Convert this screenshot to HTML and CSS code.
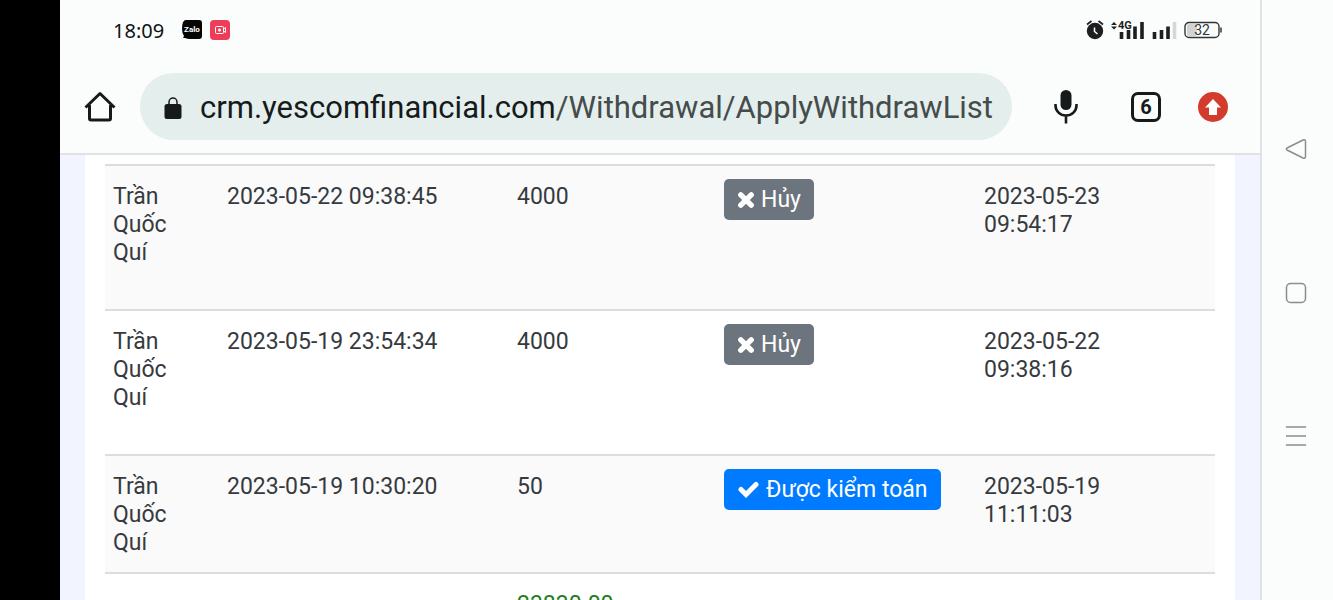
FILE: index.html
```html
<!DOCTYPE html>
<html lang="vi">
<head>
  <meta charset="UTF-8">
  <meta name="viewport" content="width=device-width, initial-scale=1">
  <title>ApplyWithdrawList</title>
  <link rel="stylesheet" href="styles.css">
</head>
<body>
  <div class="notch"></div>

  <div class="screen">
    <div class="status-bar">
      <div class="status-left">
        <span class="time">18:09</span>
        <svg width="20" height="20" viewBox="0 0 20 20">
          <path d="M4 0h13q3 0 3 3v13q0 3-3 3H8q-3 0-5-1l-2 0 1-2Q0 13 0 9 0 0 4 0z" fill="#050505"/>
          <text x="10" y="12" text-anchor="middle" class="zalo-text">Zalo</text>
        </svg>
        <svg width="20" height="20" viewBox="0 0 20 20">
          <rect width="20" height="20" rx="4" fill="#ee3d58"/>
          <g fill="none" stroke="#fff" stroke-width="1">
            <rect x="5.500" y="6.500" width="8" height="7" rx="1"/>
            <path d="M13.500 9l2-1.500v5l-2-1.500"/>
          </g>
          <circle cx="9.500" cy="10" r="1.500" fill="#fff"/>
        </svg>
      </div>
      <div class="status-right">
        <svg width="18" height="20" viewBox="0 0 18 20">
          <circle cx="9" cy="11" r="8.200" fill="#1b1f20"/>
          <path d="M1 4.500L5.500 1M17 4.500L12.500 1" stroke="#1b1f20" stroke-width="1.600"/>
          <path d="M8.500 7.500v4l3 2.500" fill="none" stroke="#fff" stroke-width="1.500"/>
        </svg>
        <svg width="34" height="20" viewBox="0 0 34 20">
          <path d="M0 5l3-3 3 3zM0 6.500l3 3 3-3z" fill="#1b1f20"/>
          <text x="7" y="9" class="net-text">4G</text>
          <path d="M10.500 12v7M17.500 10v9M24 6.500V19M31 2v17" stroke="#1b1f20" stroke-width="3.600"/>
        </svg>
        <svg width="25" height="20" viewBox="0 0 25 20">
          <path d="M2.500 12v7M9.500 10v9M16 6.500V19" stroke="#1b1f20" stroke-width="3.600"/>
          <path d="M22.500 2v17" stroke="#d5d8d7" stroke-width="3.600"/>
        </svg>
        <svg width="38" height="18" viewBox="0 0 38 18">
          <rect x="3" y="3" width="10" height="12" rx="2" fill="#d0d3d2"/>
          <rect x="1" y="1.500" width="34" height="15" rx="4" fill="none" stroke="#303435" stroke-width="1.400"/>
          <path d="M37 6.500v5" stroke="#303435" stroke-width="1.500"/>
          <text x="18" y="14" text-anchor="middle" class="battery-text">32</text>
        </svg>
      </div>
    </div>

    <div class="toolbar">
      <button class="icon-btn" aria-label="Home">
        <svg width="32" height="32" viewBox="0 0 32 32" fill="none" stroke="#161a1b" stroke-width="3" stroke-linejoin="round">
          <path d="M1.500 16.500L16 2.500l14.500 14"/>
          <path d="M5.500 14v13.500q0 1.500 1.500 1.500h18q1.500 0 1.500-1.500V14"/>
        </svg>
      </button>
      <button class="address">
        <svg width="18" height="22" viewBox="0 0 18 22">
          <rect x="0.500" y="7" width="17" height="15" rx="2.500" fill="#161a1b"/>
          <path d="M5 8V5a4 4 0 0 1 8 0v3" fill="none" stroke="#161a1b" stroke-width="1.500"/>
        </svg>
        <span class="url">crm.yescomfinancial.com<span class="path">/Withdrawal/ApplyWithdrawList</span></span>
      </button>
      <button class="icon-btn mic" aria-label="Voice search">
        <svg width="24" height="34" viewBox="0 0 24 34">
          <rect x="6.500" y="0" width="11" height="20" rx="5.500" fill="#161a1b"/>
          <path d="M1.500 14v1.500a10.500 10 0 0 0 21 0V14M12 26v7.500" fill="none" stroke="#161a1b" stroke-width="2.600"/>
        </svg>
      </button>
      <button class="tabs" aria-label="Tabs">6</button>
      <button class="icon-btn" aria-label="Update">
        <svg width="30" height="30" viewBox="0 0 30 30">
          <circle cx="15" cy="15" r="15" fill="#d33b2c"/>
          <path d="M15 7l8 8.500h-4V23h-8v-7.500H7z" fill="#fff"/>
        </svg>
      </button>
    </div>

    <div class="page">
      <div class="card">
        <table class="withdraw-table">
          <colgroup>
            <col class="col-name">
            <col class="col-date">
            <col class="col-amount">
            <col class="col-status">
            <col>
          </colgroup>
          <tbody>
            <tr class="tall">
              <td class="name">Trần Quốc Quí</td>
              <td>2023-05-22 09:38:45</td>
              <td>4000</td>
              <td class="status">
                <button class="btn btn-secondary">
                  <svg width="18" height="18" viewBox="0 0 18 18"><path d="M3.800 3.800l10.400 10.400M14.200 3.800L3.800 14.200" stroke="#fff" stroke-width="5.400" stroke-linecap="round"/></svg>
                  Hủy
                </button>
              </td>
              <td>2023-05-23 09:54:17</td>
            </tr>
            <tr class="tall">
              <td class="name">Trần Quốc Quí</td>
              <td>2023-05-19 23:54:34</td>
              <td>4000</td>
              <td class="status">
                <button class="btn btn-secondary">
                  <svg width="18" height="18" viewBox="0 0 18 18"><path d="M3.800 3.800l10.400 10.400M14.200 3.800L3.800 14.200" stroke="#fff" stroke-width="5.400" stroke-linecap="round"/></svg>
                  Hủy
                </button>
              </td>
              <td>2023-05-22 09:38:16</td>
            </tr>
            <tr>
              <td class="name">Trần Quốc Quí</td>
              <td>2023-05-19 10:30:20</td>
              <td>50</td>
              <td class="status">
                <button class="btn btn-primary">
                  <svg width="23" height="18" viewBox="0 0 23 18"><path d="M4 8.500l5 5L19 3.500" fill="none" stroke="#fff" stroke-width="5" stroke-linecap="round"/></svg>
                  Được kiểm toán
                </button>
              </td>
              <td>2023-05-19 11:11:03</td>
            </tr>
            <tr>
              <td></td>
              <td></td>
              <td class="total">23830.00</td>
              <td></td>
              <td></td>
            </tr>
          </tbody>
        </table>
      </div>
    </div>
  </div>

  <nav class="system-nav">
    <button class="icon-btn" aria-label="Back">
      <svg width="22" height="22" viewBox="0 0 22 22" fill="none" stroke="#8a8d8c" stroke-width="1.500"><path d="M2 10L18 2q2.500-.8 2.500 1.500v15q0 2.300-2.500 1.500L2 12q-1.500-1 0-2z"/></svg>
    </button>
    <button class="icon-btn" aria-label="Home screen">
      <svg width="22" height="22" viewBox="0 0 22 22" fill="none" stroke="#8a8d8c" stroke-width="1.500"><rect x="1.500" y="1.500" width="19" height="19" rx="4"/></svg>
    </button>
    <button class="icon-btn" aria-label="Recent apps">
      <svg width="22" height="22" viewBox="0 0 22 22" stroke="#8a8d8c" stroke-width="1.500"><path d="M1 2h20M1 11h20M1 20h20"/></svg>
    </button>
  </nav>
</body>
</html>
```
FILE: styles.css
```css
* {
  box-sizing: border-box;
}
body {
  margin: 0;
  height: 100vh;
  display: flex;
  overflow: hidden;
  font-family: Roboto, Arial, sans-serif;
  background: #fbfdfc;
  color: #363a40;
}
button {
  font-family: inherit;
  border: none;
  background: none;
  padding: 0;
  cursor: pointer;
}
svg {
  display: block;
  flex: none;
}
.notch {
  width: 60px;
  background: #000;
}
.screen {
  flex: 1;
  min-width: 0;
  display: flex;
  flex-direction: column;
}

/* status bar */
.status-bar {
  height: 60px;
  padding: 0 38px 0 53px;
  display: flex;
  align-items: center;
  justify-content: space-between;
}
.status-left {
  display: flex;
  align-items: center;
  gap: 8px;
}
.status-right {
  display: flex;
  align-items: center;
  gap: 7px;
}
.time {
  font-family: "Noto Sans", sans-serif;
  font-size: 20px;
  color: #101314;
  margin-right: 10px;
}
.zalo-text {
  font: bold 8px Roboto, sans-serif;
  fill: #fff;
}
.net-text {
  font: bold 11px Roboto, sans-serif;
  fill: #1b1f20;
}
.battery-text {
  font: 14px Roboto, sans-serif;
  fill: #303435;
}

/* browser toolbar */
.toolbar {
  height: 95px;
  padding: 0 32px 0 24px;
  display: flex;
  align-items: center;
  border-bottom: 2px solid #dfe3e3;
}
.address {
  flex: 1;
  min-width: 0;
  height: 67px;
  margin: 0 42px 0 24px;
  padding: 2px 16px 0 24px;
  display: flex;
  align-items: center;
  gap: 18px;
  border-radius: 34px;
  background: #e4eeed;
}
.url {
  font-size: 31px;
  white-space: nowrap;
  color: #161a1b;
}
.path {
  color: #444c4c;
}
.mic {
  margin-right: 53px;
}
.tabs {
  width: 30px;
  height: 30px;
  margin-right: 37px;
  border: 3px solid #161a1b;
  border-radius: 7px;
  font-family: Roboto, sans-serif;
  font-size: 20px;
  font-weight: 700;
  line-height: 24px;
  color: #161a1b;
}

/* page content */
.page {
  flex: 1;
  min-height: 0;
  overflow: hidden;
  padding: 0 25px;
  background: #f2f4ff;
}
.card {
  padding: 9px 20px 20px;
  background: #fff;
}
.withdraw-table {
  width: 100%;
  table-layout: fixed;
  border-collapse: separate;
  border-spacing: 0;
}
.col-name {
  width: 114px;
}
.col-date {
  width: 290px;
}
.col-amount {
  width: 207px;
}
.col-status {
  width: 260px;
}
.withdraw-table td {
  padding: 17px 8px 15px;
  border-top: 2px solid #dcdddf;
  vertical-align: top;
  font-size: 23px;
  line-height: 28px;
}
.withdraw-table .name {
  padding-right: 24px;
}
.withdraw-table td:last-child {
  padding-right: 80px;
}
.withdraw-table tr:nth-child(odd) {
  background: #fafafa;
}
.withdraw-table .tall {
  height: 145px;
}
.withdraw-table .status {
  padding-top: 13px;
}
.withdraw-table .total {
  color: #1d801d;
}
.btn {
  display: flex;
  align-items: center;
  gap: 6px;
  height: 41px;
  padding: 0 13px;
  border-radius: 5px;
  font-size: 23px;
  color: #fff;
}
.btn-secondary {
  background: #6c757d;
}
.btn-primary {
  background: #007bff;
}

/* android navigation keys */
.system-nav {
  width: 73px;
  padding: 138px 3px 153px 0;
  display: flex;
  flex-direction: column;
  align-items: center;
  justify-content: space-between;
  border-left: 2px solid #dfe3e3;
}
```
